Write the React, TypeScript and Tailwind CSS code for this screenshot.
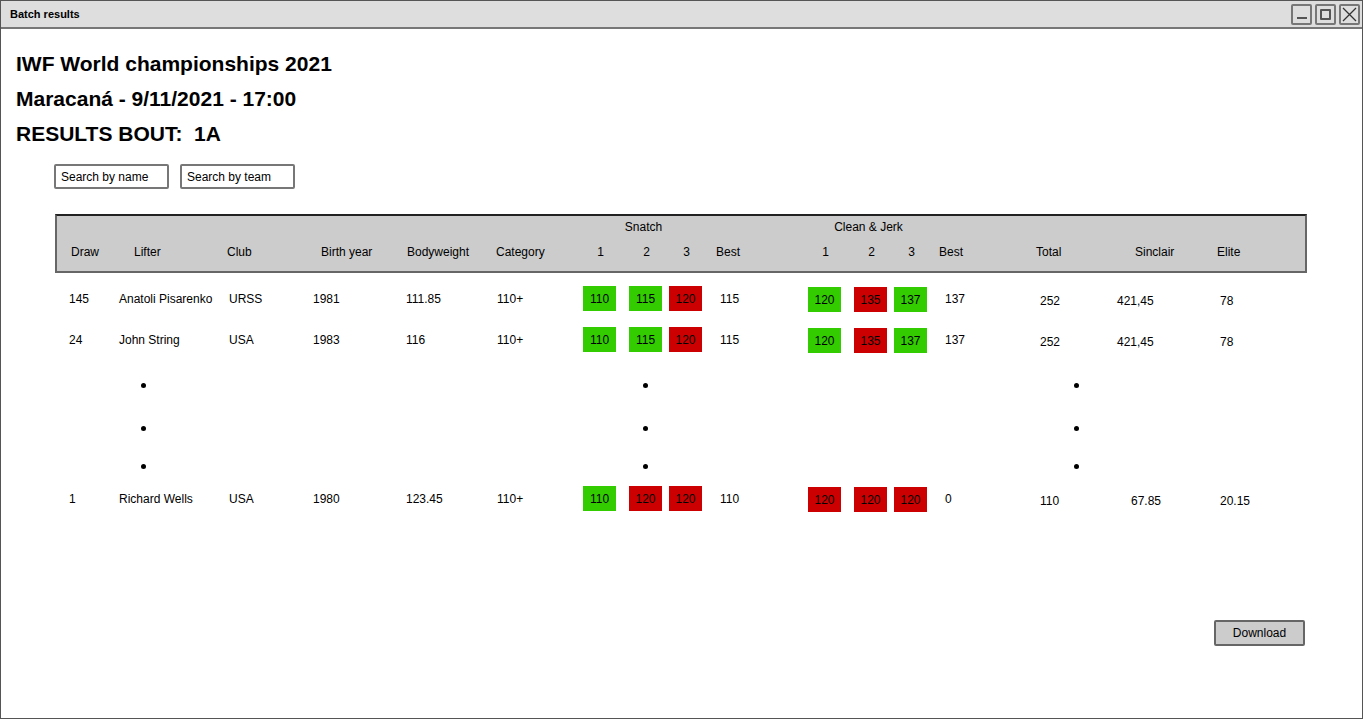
import React from "react";

type Attempt = { v: string; ok: boolean };

type Lifter = {
  draw: string;
  name: string;
  club: string;
  birth: string;
  bw: string;
  cat: string;
  snatch: Attempt[];
  snatchBest: string;
  cj: Attempt[];
  cjBest: string;
  total: string;
  sinclair: string;
  elite: string;
  sinclairShift?: boolean;
};

const rows: Lifter[] = [
  {
    draw: "145",
    name: "Anatoli Pisarenko",
    club: "URSS",
    birth: "1981",
    bw: "111.85",
    cat: "110+",
    snatch: [
      { v: "110", ok: true },
      { v: "115", ok: true },
      { v: "120", ok: false },
    ],
    snatchBest: "115",
    cj: [
      { v: "120", ok: true },
      { v: "135", ok: false },
      { v: "137", ok: true },
    ],
    cjBest: "137",
    total: "252",
    sinclair: "421,45",
    elite: "78",
  },
  {
    draw: "24",
    name: "John String",
    club: "USA",
    birth: "1983",
    bw: "116",
    cat: "110+",
    snatch: [
      { v: "110", ok: true },
      { v: "115", ok: true },
      { v: "120", ok: false },
    ],
    snatchBest: "115",
    cj: [
      { v: "120", ok: true },
      { v: "135", ok: false },
      { v: "137", ok: true },
    ],
    cjBest: "137",
    total: "252",
    sinclair: "421,45",
    elite: "78",
  },
];

const last: Lifter = {
  draw: "1",
  name: "Richard Wells",
  club: "USA",
  birth: "1980",
  bw: "123.45",
  cat: "110+",
  snatch: [
    { v: "110", ok: true },
    { v: "120", ok: false },
    { v: "120", ok: false },
  ],
  snatchBest: "110",
  cj: [
    { v: "120", ok: false },
    { v: "120", ok: false },
    { v: "120", ok: false },
  ],
  cjBest: "0",
  total: "110",
  sinclair: "67.85",
  elite: "20.15",
  sinclairShift: true,
};

function Box({ a }: { a: Attempt }) {
  return (
    <div
      className={
        "w-[33px] h-[25px] flex items-center justify-center " +
        (a.ok ? "bg-[#33cc00]" : "bg-[#cc0000]")
      }
    >
      {a.v}
    </div>
  );
}

function DataRow({ r }: { r: Lifter }) {
  return (
    <div className="grid grid-cols-[50px_110px_84px_93px_91px_86px_46px_40px_51px_88px_46px_40px_51px_95px_77px_103px_1fr] items-center h-[26px] pl-[14px]">
      <div>{r.draw}</div>
      <div className="whitespace-nowrap">{r.name}</div>
      <div>{r.club}</div>
      <div>{r.birth}</div>
      <div>{r.bw}</div>
      <div>{r.cat}</div>
      <Box a={r.snatch[0]} />
      <Box a={r.snatch[1]} />
      <Box a={r.snatch[2]} />
      <div>{r.snatchBest}</div>
      <div className="pt-[2px]"><Box a={r.cj[0]} /></div>
      <div className="pt-[2px]"><Box a={r.cj[1]} /></div>
      <div className="pt-[2px]"><Box a={r.cj[2]} /></div>
      <div>{r.cjBest}</div>
      <div className="pt-[4px]">{r.total}</div>
      <div className={r.sinclairShift ? "pt-[4px] pl-[14px]" : "pt-[4px]"}>{r.sinclair}</div>
      <div className="pt-[5px]">{r.elite}</div>
    </div>
  );
}

function Dot() {
  return <div className="w-[5px] h-[5px] rounded-full bg-black" />;
}

function DotLine() {
  return (
    <div className="flex h-[5px] items-center">
      <div className="w-[86px]" />
      <Dot />
      <div className="w-[497px]" />
      <Dot />
      <div className="w-[426px]" />
      <Dot />
    </div>
  );
}

export default function App() {
  return (
    <main
      className="w-screen h-screen overflow-hidden bg-white text-black border border-[#555] flex flex-col text-[12px]"
      style={{ fontFamily: '"Liberation Sans", Arial, sans-serif' }}
    >
      <div className="h-[28px] shrink-0 bg-[#dedede] border-b-2 border-[#777] flex items-center justify-between pl-[9px] pr-[2px]">
        <span className="text-[11px] font-bold">Batch results</span>
        <div className="flex gap-[3px]">
          <div className="w-[21px] h-[21px] border-2 border-[#777] rounded-[2px] flex items-end justify-center pb-[4px]">
            <div className="w-[10px] h-[2px] bg-[#555]" />
          </div>
          <div className="w-[21px] h-[21px] border-2 border-[#777] rounded-[2px] flex items-center justify-center">
            <div className="w-[11px] h-[11px] border-2 border-[#555] rounded-[1px]" />
          </div>
          <div className="w-[21px] h-[21px] border-2 border-[#777] rounded-[2px] flex items-center justify-center">
            <svg width="15" height="15" viewBox="0 0 15 15">
              <path d="M1 1 L14 14 M14 1 L1 14" stroke="#333" strokeWidth="1.3" />
            </svg>
          </div>
        </div>
      </div>

      <div className="pt-[17px] pl-[15px] text-[21px] font-bold leading-[35px]">
        <div>IWF World championships 2021</div>
        <div>Maracaná - 9/11/2021 - 17:00</div>
        <div>RESULTS BOUT:&nbsp; 1A</div>
      </div>

      <div className="flex gap-[11px] mt-[13px] ml-[53px]">
        <div className="w-[115px] h-[25px] border-2 border-[#777] rounded-[2px] flex items-center pl-[5px]">
          Search by name
        </div>
        <div className="w-[115px] h-[25px] border-2 border-[#777] rounded-[2px] flex items-center pl-[5px]">
          Search by team
        </div>
      </div>

      <div className="ml-[54px] w-[1252px] mt-[25px] h-[59px] bg-[#cccccc] border-2 border-[#666] border-t-[#222] flex flex-col">
        <div className="flex h-[22px] items-center">
          <div className="w-[527px]" />
          <div className="w-[119px] text-center">Snatch</div>
          <div className="w-[106px]" />
          <div className="w-[119px] text-center">Clean &amp; Jerk</div>
        </div>
        <div className="grid grid-cols-[63px_93px_94px_86px_89px_88px_46px_40px_46px_93px_46px_40px_44px_97px_99px_82px_1fr] items-center h-[27px] pl-[14px]">
          <div>Draw</div>
          <div>Lifter</div>
          <div>Club</div>
          <div>Birth year</div>
          <div>Bodyweight</div>
          <div>Category</div>
          <div className="w-[33px] text-center">1</div>
          <div className="w-[33px] text-center">2</div>
          <div className="w-[33px] text-center">3</div>
          <div>Best</div>
          <div className="w-[33px] text-center">1</div>
          <div className="w-[33px] text-center">2</div>
          <div className="w-[33px] text-center">3</div>
          <div>Best</div>
          <div>Total</div>
          <div>Sinclair</div>
          <div>Elite</div>
        </div>
      </div>

      <div className="ml-[54px] w-[1251px] mt-[12px] flex flex-col gap-[15px]">
        {rows.map((r) => (
          <DataRow key={r.draw} r={r} />
        ))}
      </div>

      <div className="ml-[54px] mt-[31px] flex flex-col">
        <DotLine />
        <div className="h-[38px]" />
        <DotLine />
        <div className="h-[33px]" />
        <DotLine />
      </div>

      <div className="ml-[54px] w-[1251px] mt-[16px]">
        <DataRow r={last} />
      </div>

      <div className="flex justify-end pr-[57px] mt-[109px]">
        <div className="w-[91px] h-[26px] bg-[#cccccc] border-2 border-[#666] rounded-[2px] flex items-center justify-center">
          Download
        </div>
      </div>
    </main>
  );
}
